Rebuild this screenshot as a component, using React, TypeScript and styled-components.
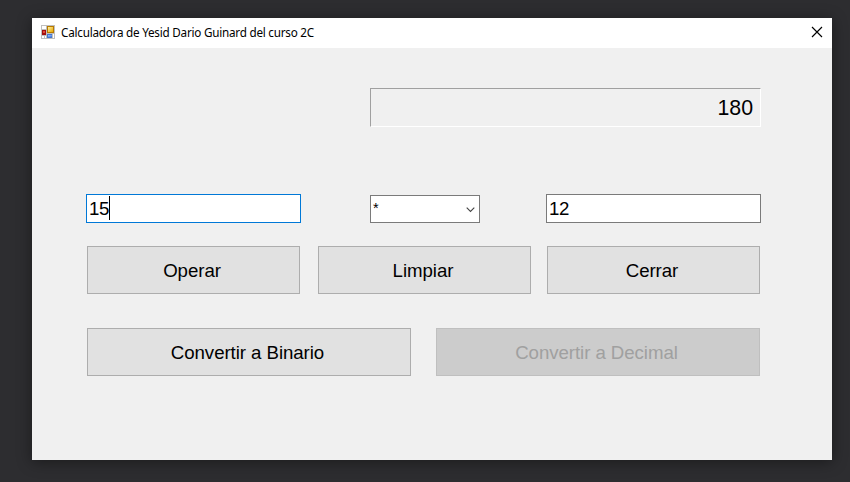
import React from "react";
import styled, { createGlobalStyle } from "styled-components";

const GlobalStyle = createGlobalStyle`
  * { box-sizing: border-box; }
  body { margin: 0; background: #2d2d30; overflow: hidden; }
`;

const Desktop = styled.main`
  width: 850px;
  height: 482px;
  padding: 18px 18px 22px 32px;
  background: #2d2d30;
  color: #000;
  font-family: "Liberation Sans", Arial, sans-serif;
`;

const Window = styled.section`
  width: 800px;
  height: 442px;
  background: #f0f0f0;
  box-shadow: 0 2px 14px rgba(0, 0, 0, 0.42);
`;

const TitleBar = styled.header`
  display: flex;
  align-items: flex-start;
  height: 30px;
  padding: 7px 9px 0;
  background: #fff;
`;

const Title = styled.h1`
  flex: 1;
  margin: -1px 0 0 6px;
  font: 400 11.7px/16px "Noto Sans", "Open Sans", sans-serif;
  letter-spacing: -0.23px;
  white-space: nowrap;
`;

const CloseButton = styled.button`
  display: flex;
  margin-top: 1px;
  padding: 0;
  border: 0;
  background: none;
`;

const Form = styled.div`
  padding: 40px 71px 0 54px;
`;

const Result = styled.output`
  display: block;
  width: 391px;
  height: 39px;
  margin-left: auto;
  padding-right: 7px;
  border: 1px solid;
  border-color: #a0a0a0 #fff #fff #a0a0a0;
  font-size: 21.33px;
  line-height: 38px;
  text-align: right;
`;

const Operands = styled.div`
  display: flex;
  align-items: flex-end;
  justify-content: space-between;
  margin-top: 67px;
`;

const NumberField = styled.div<{ $focused?: boolean }>`
  display: flex;
  align-items: center;
  width: 215px;
  height: 29px;
  padding-left: 2px;
  border: 1px solid ${(p) => (p.$focused ? "#0078d7" : "#7a7a7a")};
  background: #fff;
  font-size: 18.67px;
  letter-spacing: -0.3px;
  line-height: 27px;
`;

const Caret = styled.span`
  width: 1px;
  height: 24px;
  margin-bottom: 2px;
  background: #000;
`;

const OperatorSelect = styled.div`
  display: flex;
  justify-content: space-between;
  width: 110px;
  height: 28px;
  margin-right: -3px;
  padding: 0 4px 0 2px;
  border: 1px solid #7a7a7a;
  background: #fff;
  font-size: 14.5px;
  line-height: 24px;
`;

const ChevronIcon = styled.svg`
  margin-top: 11px;
`;

const Button = styled.button`
  height: 48px;
  padding: 1px 3px 0 0;
  border: 1px solid #adadad;
  border-radius: 0;
  background: #e1e1e1;
  color: #000;
  font: 400 18.67px "Liberation Sans", Arial, sans-serif;
  letter-spacing: -0.06px;

  &:disabled {
    border-color: #bfbfbf;
    background: #ccc;
    color: #a0a0a0;
  }
`;

const ActionRow = styled.div`
  display: grid;
  grid-template-columns: 213px 18px 213px 16px 213px;
  margin: 23px 1px 0;

  & > :nth-child(2) { grid-column: 3; }
  & > :nth-child(3) { grid-column: 5; }
`;

const ConvertRow = styled.div`
  display: grid;
  grid-template-columns: 324px 324px;
  column-gap: 25px;
  margin: 34px 1px 0;
`;

function AppIcon() {
  return (
    <svg width="14" height="14" viewBox="0 0 14 14" shapeRendering="crispEdges">
      <defs>
        <linearGradient id="gold" x2="1" y2="1">
          <stop stopColor="#fff0a0" />
          <stop offset="1" stopColor="#e8a800" />
        </linearGradient>
        <linearGradient id="blue" x2="1" y2="1">
          <stop stopColor="#a4c8ff" />
          <stop offset="1" stopColor="#356edc" />
        </linearGradient>
      </defs>
      <path fill="#bfbfbf" d="M0 0h14v14H0z" />
      <path fill="#fff" d="M1 1h4v3H1zM1 11h2v2H1zM4 11h1v2H4zM12 9h1v4h-1z" />
      <path fill="#b77900" d="M6 1h7v7H6z" />
      <path fill="url(#gold)" d="M7 2h5v5H7z" />
      <path fill="#a20e0e" d="M1 5h4v5H1z" />
      <path fill="#e24a35" d="M2 6h2v2H2z" />
      <path fill="#4576ca" d="M6 9h5v4H6z" />
      <path fill="url(#blue)" d="M7 10h4v2H7z" />
    </svg>
  );
}

export default function App() {
  return (
    <>
      <GlobalStyle />
      <Desktop>
        <Window>
          <TitleBar>
            <AppIcon />
            <Title>Calculadora de Yesid Dario Guinard del curso 2C</Title>
            <CloseButton aria-label="Cerrar ventana">
              <svg width="12" height="12" viewBox="0 0 12 12">
                <path d="M1 1 11 11M11 1 1 11" stroke="#000" strokeWidth="1.15" />
              </svg>
            </CloseButton>
          </TitleBar>
          <Form>
            <Result>180</Result>
            <Operands>
              <NumberField $focused>
                15
                <Caret />
              </NumberField>
              <OperatorSelect>
                *
                <ChevronIcon width="9" height="6" viewBox="0 0 9 6">
                  <path d="m.7.7 3.8 3.8L8.3.7" fill="none" stroke="#444" strokeWidth="1.1" />
                </ChevronIcon>
              </OperatorSelect>
              <NumberField>12</NumberField>
            </Operands>
            <ActionRow>
              <Button>Operar</Button>
              <Button>Limpiar</Button>
              <Button>Cerrar</Button>
            </ActionRow>
            <ConvertRow>
              <Button>Convertir a Binario</Button>
              <Button disabled>Convertir a Decimal</Button>
            </ConvertRow>
          </Form>
        </Window>
      </Desktop>
    </>
  );
}
